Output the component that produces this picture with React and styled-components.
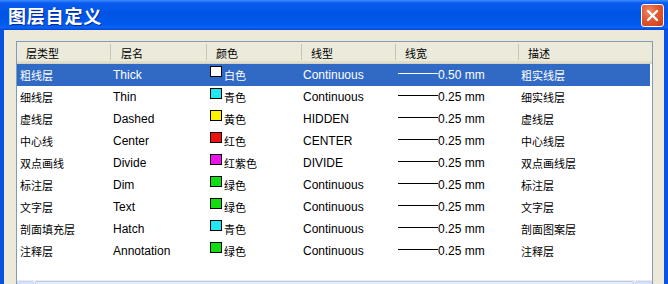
import React from 'react';
import styled, { createGlobalStyle } from 'styled-components';

const GlobalStyle = createGlobalStyle`
  html, body {
    margin: 0;
    padding: 0;
    background: #ece9d8;
  }
  body {
    font-family: "Liberation Sans", "Noto Sans CJK SC", sans-serif;
    font-size: 12px;
  }
`;

const Window = styled.div`
  width: 668px;
  height: 284px;
  overflow: hidden;
  display: flex;
  flex-direction: column;
  background: #0a52e2;
`;

const TitleBar = styled.div`
  height: 30px;
  flex: none;
  display: flex;
  align-items: center;
  justify-content: space-between;
  padding: 0 4px 0 8px;
  background: linear-gradient(
    to bottom,
    #3d8cff 0px,
    #0a5cf0 3px,
    #0054e3 45%,
    #0059ee 80%,
    #0a61f4 92%,
    #0046d4 100%
  );
`;

const Title = styled.span`
  color: #fff;
  font-family: "Noto Sans CJK SC", sans-serif;
  font-size: 18px;
  font-weight: bold;
  letter-spacing: 0.8px;
  text-shadow: 1px 1px 0 #0a2a9a;
`;

const CloseButton = styled.div`
  width: 23px;
  height: 23px;
  box-sizing: border-box;
  border: 1px solid #fff;
  border-radius: 3px;
  background: radial-gradient(circle at 35% 30%, #f08a68 0%, #e2582f 45%, #c83d18 100%);
  display: flex;
  align-items: center;
  justify-content: center;
`;

const Body = styled.div`
  flex: 1;
  margin: 0 4px;
  background: #ece9d8;
  padding: 11px 11px 0 12px;
  min-height: 0;
  overflow: hidden;
`;

const ListBox = styled.div`
  border: 1px solid #7f9db9;
  background: #fff;
  display: flex;
  flex-direction: column;
`;

const cols = '94px 96px 95px 94px 123px 1fr';

const Header = styled.div`
  display: grid;
  grid-template-columns: ${cols};
  height: 22px;
  box-sizing: border-box;
  background: #ebeadb;
  border-bottom: 1px solid #d6d2c2;
  box-shadow: inset 0 -2px 0 #e2decd;
`;

const HeaderCell = styled.div`
  display: flex;
  align-items: center;
  padding-left: ${p => p.$pad}px;
  padding-top: 1px;
  border-right: 1px solid transparent;
  border-image: linear-gradient(
      to bottom,
      transparent 3px,
      #c7c5b2 3px,
      #c7c5b2 calc(100% - 4px),
      transparent calc(100% - 4px)
    )
    1;
  ${p => p.$last && 'border-right: none;'}
`;

const Cn = styled.span`
  font-family: "Noto Sans CJK SC", sans-serif;
  font-size: 11px;
`;

const Rows = styled.div`
  height: 216px;
`;

const Row = styled.div`
  display: grid;
  grid-template-columns: ${cols};
  height: 22px;
  margin-right: 2px;
  background: ${p => (p.$selected ? '#316ac5' : 'transparent')};
  color: ${p => (p.$selected ? '#fff' : '#000')};
`;

const Cell = styled.div`
  display: flex;
  align-items: center;
  padding-left: ${p => p.$pad}px;
  white-space: nowrap;
`;

const Swatch = styled.span`
  width: 12px;
  height: 11px;
  box-sizing: border-box;
  border: 1px solid #000;
  background: ${p => p.$color};
  align-self: flex-start;
  margin-top: 2px;
  margin-right: 2px;
  flex: none;
`;

const WidthLine = styled.span`
  width: 40px;
  height: 1px;
  background: currentColor;
  margin-bottom: 3px;
  flex: none;
`;

const ScrollBar = styled.div`
  height: 17px;
  display: flex;
  background: #f4f3ee;
  border-top: 1px solid #eeede5;
`;

const ScrollBtn = styled.div`
  width: 17px;
  box-sizing: border-box;
  border: 1px solid #c3d3fd;
  border-radius: 2px;
  background: #d5e1fd;
`;

const Thumb = styled.div`
  flex: 1;
  margin: 0 1px;
  box-sizing: border-box;
  border: 1px solid #b8cbf7;
  border-radius: 2px;
  background: #e3ebfd;
`;

const layers = [
  { type: '粗线层', name: 'Thick', color: '#ffffff', cname: '白色', line: 'Continuous', w: '0.50 mm', desc: '粗实线层' },
  { type: '细线层', name: 'Thin', color: '#22e6f0', cname: '青色', line: 'Continuous', w: '0.25 mm', desc: '细实线层' },
  { type: '虚线层', name: 'Dashed', color: '#fff200', cname: '黄色', line: 'HIDDEN', w: '0.25 mm', desc: '虚线层' },
  { type: '中心线', name: 'Center', color: '#ee1111', cname: '红色', line: 'CENTER', w: '0.25 mm', desc: '中心线层' },
  { type: '双点画线', name: 'Divide', color: '#ee11ee', cname: '红紫色', line: 'DIVIDE', w: '0.25 mm', desc: '双点画线层' },
  { type: '标注层', name: 'Dim', color: '#11dd11', cname: '绿色', line: 'Continuous', w: '0.25 mm', desc: '标注层' },
  { type: '文字层', name: 'Text', color: '#11dd11', cname: '绿色', line: 'Continuous', w: '0.25 mm', desc: '文字层' },
  { type: '剖面填充层', name: 'Hatch', color: '#22e6f0', cname: '青色', line: 'Continuous', w: '0.25 mm', desc: '剖面图案层' },
  { type: '注释层', name: 'Annotation', color: '#11dd11', cname: '绿色', line: 'Continuous', w: '0.25 mm', desc: '注释层' },
];

const headers = ['层类型', '层名', '颜色', '线型', '线宽', '描述'];

export default function App() {
  return (
    <>
      <GlobalStyle />
      <Window>
        <TitleBar>
          <Title>图层自定义</Title>
          <CloseButton>
            <svg width="13" height="13" viewBox="0 0 13 13">
              <path d="M2 2 L11 11 M11 2 L2 11" stroke="#fff" strokeWidth="2.4" strokeLinecap="round" />
            </svg>
          </CloseButton>
        </TitleBar>
        <Body>
          <ListBox>
            <Header>
              {headers.map((h, i) => (
                <HeaderCell key={h} $pad={i === 1 ? 10 : 9} $last={i === headers.length - 1}>
                  <Cn>{h}</Cn>
                </HeaderCell>
              ))}
            </Header>
            <Rows>
              {layers.map((l, i) => (
                <Row key={l.name} $selected={i === 0}>
                  <Cell $pad={3}><Cn>{l.type}</Cn></Cell>
                  <Cell $pad={2}>{l.name}</Cell>
                  <Cell $pad={3}>
                    <Swatch $color={l.color} />
                    <Cn>{l.cname}</Cn>
                  </Cell>
                  <Cell $pad={1}>{l.line}</Cell>
                  <Cell $pad={2}>
                    <WidthLine />
                    {l.w}
                  </Cell>
                  <Cell $pad={2}><Cn>{l.desc}</Cn></Cell>
                </Row>
              ))}
            </Rows>
            <ScrollBar>
              <ScrollBtn />
              <Thumb />
              <ScrollBtn />
            </ScrollBar>
          </ListBox>
        </Body>
      </Window>
    </>
  );
}
